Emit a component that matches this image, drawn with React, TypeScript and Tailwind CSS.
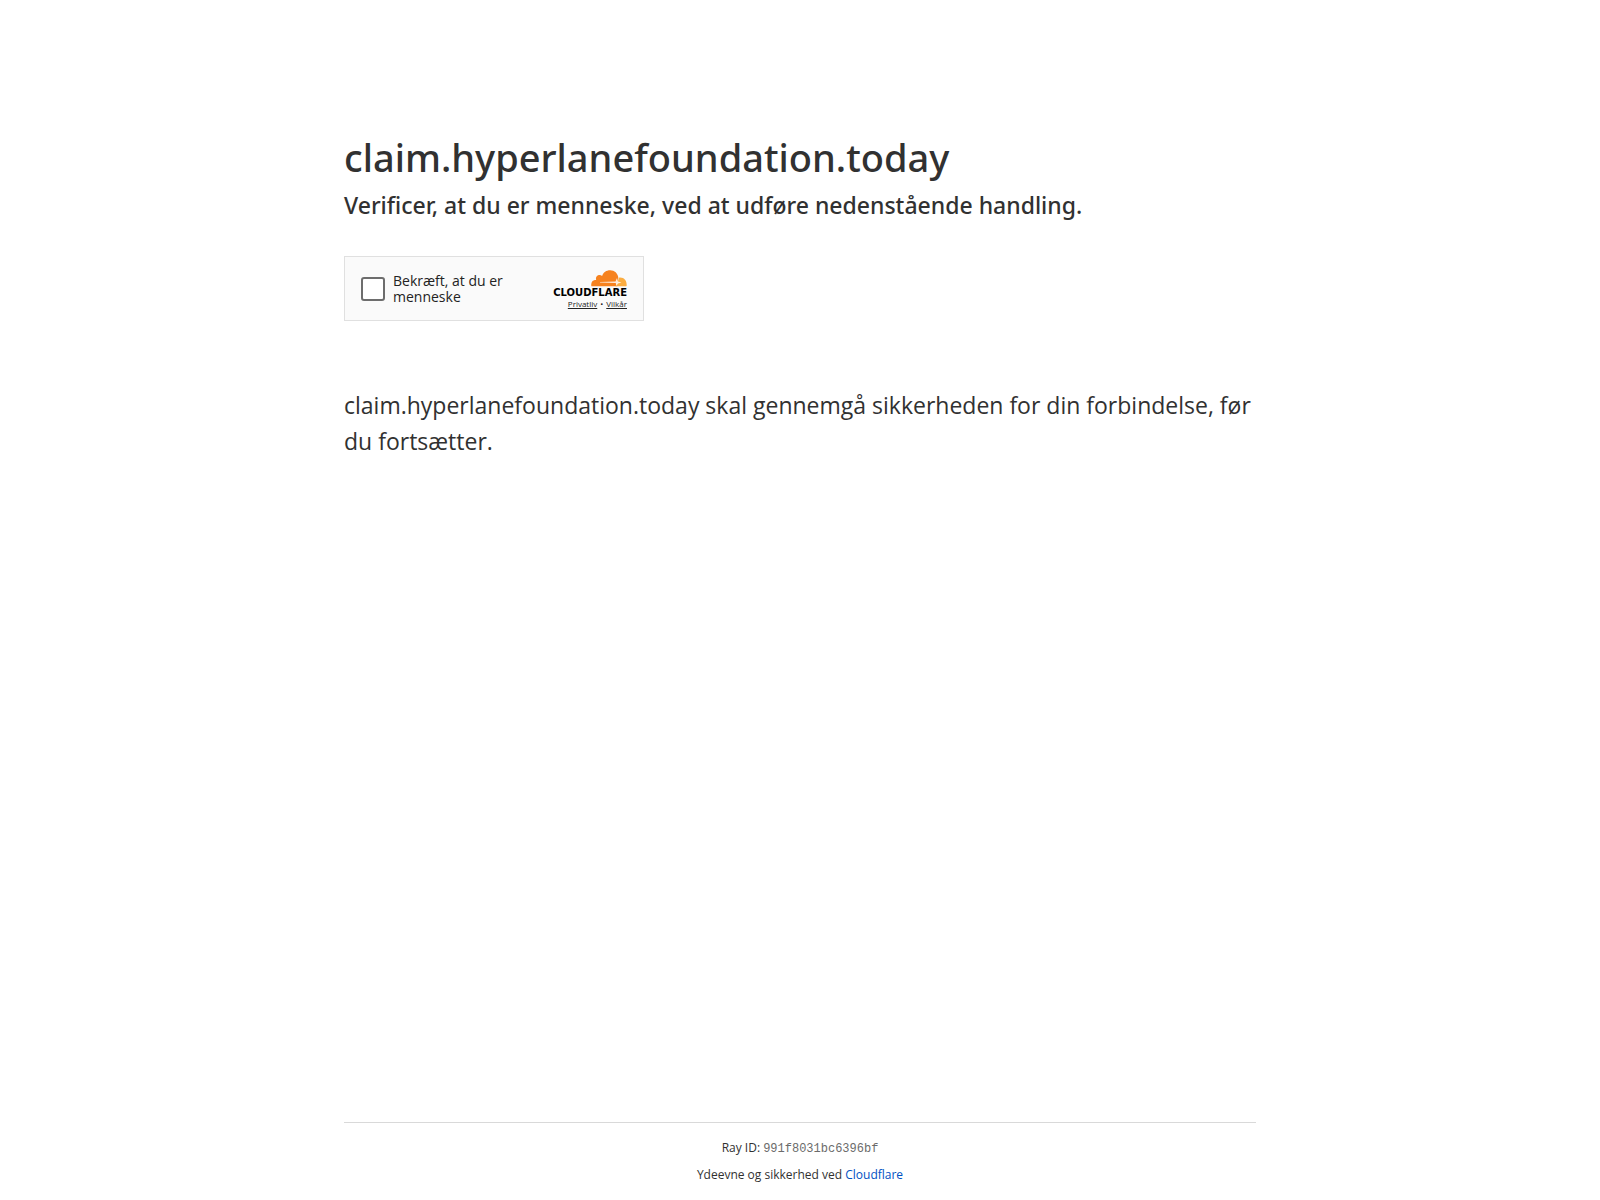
const host = 'claim.hyperlanefoundation.today';
const rayId = '991f8031bc6396bf';

function CloudflareLogo() {
  return (
    <div className="flex flex-col items-end">
      <svg width="36" height="17" viewBox="0 0 36 17" aria-hidden="true">
        <path
          d="M26.2 16.2H.3C0 13.4.6 11 3.1 10.3c.9-.3 1.7-.3 2.1-.2C4.300 7.2 6.100 5 8.500 5c1.100 0 1.900.4 2.600.9C12.300 2.300 15.300.2 19.100.2c4.500 0 7.700 3.200 8.200 7.400.2 1.400-.2 2.600-.5 4Z"
          fill="#f6821f"
        />
        <path
          d="M28.200 7.500c4.700-.5 7.700 2.800 7.500 7.900 0 .5-.2.800-.6.800H24.500l2.300-4.600Z"
          fill="#fbad41"
        />
        <path
          d="M9 11.900l15.500-.3 1.500-3.600.9 3.600 3.600.9-3.600.9-1.400 2.400-.8-2.800L9 12.500Z"
          fill="#fff"
          fillOpacity="0.85"
        />
      </svg>
      <span className="font-['DejaVu_Sans',sans-serif] text-[10px] leading-[12px] font-bold text-black">
        CLOUDFLARE
      </span>
    </div>
  );
}

function Challenge() {
  return (
    <div className="flex h-[65px] w-[300px] items-center justify-between border border-[#e0e0e0] bg-[#fafafa] px-4 text-[#232323]">
      <label className="flex items-center gap-2 text-sm leading-4">
        <input
          type="checkbox"
          className="size-6 shrink-0 appearance-none rounded-[3px] border-2 border-[#6d6d6d] bg-white"
        />
        <span className="w-[120px]">Bekræft, at du er menneske</span>
      </label>
      <div className="flex flex-col items-end">
        <CloudflareLogo />
        <div className="flex gap-[3px] text-[8px] leading-[9px]">
          <a href="#privacy" className="underline">Privatliv</a>
          <span aria-hidden="true">•</span>
          <a href="#terms" className="underline">Vilkår</a>
        </div>
      </div>
    </div>
  );
}

export default function App() {
  return (
    <div className="flex min-h-screen flex-col bg-white font-['Open_Sans',sans-serif] text-[#313131]">
      <main className="mx-auto w-full max-w-[960px] flex-1 px-6 pt-[127px]">
        <h1 className="font-['Noto_Sans',sans-serif] text-[38px] leading-[60px] font-medium">{host}</h1>
        <h2 className="font-['Noto_Sans',sans-serif] text-[23px] leading-9 font-medium">
          Verificer, at du er menneske, ved at udføre nedenstående handling.
        </h2>
        <div className="mt-[33px] mb-[66px]">
          <Challenge />
        </div>
        <p className="text-[23px] leading-9">
          {`${host} skal gennemgå sikkerheden for din forbindelse, før du fortsætter.`}
        </p>
      </main>
      <footer className="mx-auto w-full max-w-[960px] px-6 text-center text-xs leading-[18px]">
        <div className="border-t border-[#d9d9d9] py-4">
          <div>
            Ray ID: <code className="font-['Liberation_Mono',monospace] text-[#6b6b6b]">{rayId}</code>
          </div>
          <div className="mt-2">
            Ydeevne og sikkerhed ved{' '}
            <a href="https://www.cloudflare.com" className="text-[#0051c3]">Cloudflare</a>
          </div>
        </div>
      </footer>
    </div>
  );
}
